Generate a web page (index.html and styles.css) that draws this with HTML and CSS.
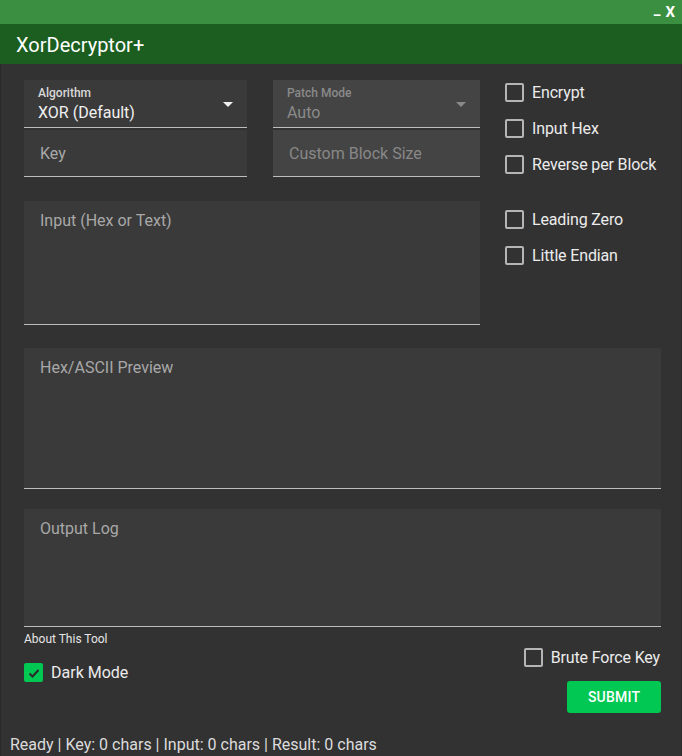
FILE: index.html
```html
<!DOCTYPE html>
<html>
<head>
<meta charset="utf-8">
<link rel="stylesheet" href="styles.css">
</head>
<body>
<div class="window">
  <div class="titlebar">
    <span class="tb-btn tb-min">_</span>
    <span class="tb-btn tb-close">X</span>
  </div>
  <div class="header">XorDecryptor+</div>
  <div class="content">
    <div class="top">
      <div class="left">
        <div class="fields">
          <div class="field select">
            <div class="label">Algorithm</div>
            <div class="value">XOR (Default)</div>
            <span class="arrow"></span>
          </div>
          <div class="field select disabled">
            <div class="label">Patch Mode</div>
            <div class="value">Auto</div>
            <span class="arrow"></span>
          </div>
          <div class="field text">
            <div class="placeholder">Key</div>
          </div>
          <div class="field text disabled">
            <div class="placeholder">Custom Block Size</div>
          </div>
        </div>
        <div class="area area-input"><div class="placeholder">Input (Hex or Text)</div></div>
      </div>
      <div class="checks">
        <label class="check"><span class="box"></span><span>Encrypt</span></label>
        <label class="check"><span class="box"></span><span>Input Hex</span></label>
        <label class="check"><span class="box"></span><span>Reverse per Block</span></label>
        <label class="check gap"><span class="box"></span><span>Leading Zero</span></label>
        <label class="check"><span class="box"></span><span>Little Endian</span></label>
      </div>
    </div>
    <div class="area area-preview"><div class="placeholder">Hex/ASCII Preview</div></div>
    <div class="area area-log"><div class="placeholder">Output Log</div></div>
    <div class="bottom">
      <div class="bottom-left">
        <div class="about">About This Tool</div>
        <label class="check dark"><span class="box checked"><svg viewBox="0 0 20 20" width="20" height="20"><path d="M5.5 10.5 L8.5 13.5 L14.5 7" fill="none" stroke="#2a2a2a" stroke-width="2"/></svg></span><span>Dark Mode</span></label>
      </div>
      <div class="bottom-right">
        <label class="check brute"><span class="box"></span><span>Brute Force Key</span></label>
        <button class="submit">SUBMIT</button>
      </div>
    </div>
  </div>
  <div class="status">Ready | Key: 0 chars | Input: 0 chars | Result: 0 chars</div>
</div>
</body>
</html>
```
FILE: styles.css
```css
* { box-sizing: border-box; }
html, body { margin: 0; padding: 0; }
body {
  width: 682px;
  height: 756px;
  background: #323232;
  font-family: Roboto, "Noto Sans", sans-serif;
  overflow: hidden;
}
.window {
  width: 682px;
  height: 756px;
  background: #323232;
  border-left: 1px solid #2a2a2a;
  border-right: 1px solid #2a2a2a;
  display: flex;
  flex-direction: column;
}
.titlebar {
  height: 24px;
  background: #3a8f40;
  display: flex;
  justify-content: flex-end;
  align-items: center;
  padding-right: 7px;
  gap: 5px;
  margin-left: -1px;
  margin-right: -1px;
}
.tb-btn {
  color: #fff;
  font-weight: bold;
  font-size: 15px;
  line-height: 1;
}
.tb-min { margin-top: -5px; }
.header {
  height: 40px;
  background: #1b5e20;
  color: #fff;
  font-size: 20px;
  padding-left: 16px;
  display: flex;
  align-items: center;
  padding-top: 1px;
  margin-left: -1px;
  margin-right: -1px;
}
.content {
  padding: 16px 20px 0 23px;
  display: flex;
  flex-direction: column;
}
.top {
  display: flex;
  gap: 25px;
}
.left { width: 456px; }
.fields {
  display: grid;
  grid-template-columns: 223px 207px;
  column-gap: 26px;
  row-gap: 2px;
}
.field {
  position: relative;
  background: #3a3a3a;
  border-bottom: 1px solid #bdbdbd;
  height: 48px;
}
.field.disabled { background: #444; border-bottom-color: #bdbdbd; }
.field.text { height: 47px; }
.label {
  font-size: 12px;
  color: #d8d8d8;
  position: absolute;
  left: 14px;
  top: 6px;
  font-weight: 500;
}
.value {
  font-size: 16px;
  color: #f0f0f0;
  position: absolute;
  left: 14px;
  top: 23px;
}
.disabled .label { color: #8a8a8a; }
.disabled .value { color: #8a8a8a; }
.arrow {
  position: absolute;
  right: 14px;
  top: 22px;
  width: 0; height: 0;
  border-left: 5px solid transparent;
  border-right: 5px solid transparent;
  border-top: 5px solid #f0f0f0;
}
.disabled .arrow { border-top-color: #8a8a8a; }
.placeholder {
  font-size: 16px;
  color: #a8a8a8;
  position: absolute;
  left: 16px;
  top: 14px;
}
.disabled .placeholder { color: #888; }
.area {
  position: relative;
  background: #3a3a3a;
  border-bottom: 1px solid #bdbdbd;
}
.area .placeholder { top: 10px; }
.area-input { margin-top: 24px; height: 124px; }
.area-preview { margin-top: 23px; height: 141px; width: 637px; }
.area-log { margin-top: 20px; height: 118px; width: 637px; }
.checks {
  display: flex;
  flex-direction: column;
  gap: 12px;
}
.check {
  display: flex;
  align-items: center;
  height: 24px;
  font-size: 16px;
  color: #ececec;
  gap: 8px;
  letter-spacing: -0.15px;
}
.check.gap { margin-top: 19px; }
.box {
  width: 19px;
  height: 19px;
  border: 2px solid #b5b5b5;
  border-radius: 2px;
  display: inline-block;
  flex: none;
  position: relative;
}
.box.checked {
  background: #00c853;
  border-color: #00c853;
}
.box.checked svg { position: absolute; left: -2px; top: -2px; }
.bottom {
  display: flex;
  justify-content: space-between;
  width: 637px;
}
.about {
  font-size: 12px;
  color: #e6e6e6;
  margin-top: 5px;
}
.check.dark { margin-top: 14px; gap: 8px; letter-spacing: 0; }
.check.brute { margin-right: 1px; }
.bottom-right {
  display: flex;
  flex-direction: column;
  align-items: flex-end;
  padding-top: 18px;
}
.submit {
  margin-top: 12px;
  width: 94px;
  height: 32px;
  background: #00c853;
  color: #fff;
  border: none;
  border-radius: 3px;
  font-family: Roboto, sans-serif;
  font-weight: 500;
  font-size: 14px;
  letter-spacing: 0.2px;
}
.status {
  margin-top: auto;
  padding: 3px 0 0 9px;
  font-size: 16px;
  color: #dcdcdc;
  height: 24px;
}
```
